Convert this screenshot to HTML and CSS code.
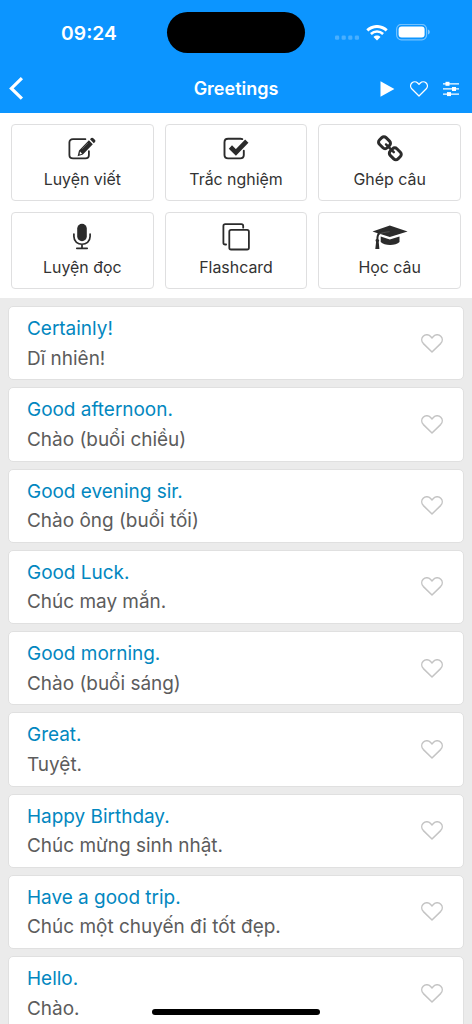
FILE: index.html
```html
<!DOCTYPE html>
<html lang="vi">
<head>
  <meta charset="utf-8">
  <title>Greetings</title>
  <link rel="stylesheet" href="styles.css">
</head>
<body>
  <svg class="defs" width="0" height="0">
    <symbol id="heart" viewBox="0 0 22 19">
      <path d="M11 18L2.4 9.6C.2 7.3.3 4.1 2.2 2.2 4.3.2 7.5.3 9.4 2.2L11 3.9l1.6-1.7c1.9-1.9 5.1-2 7.2 0 1.9 1.9 2 5.1-.2 7.4z" fill="none" stroke="currentColor" stroke-linejoin="round"/>
    </symbol>
  </svg>

  <header class="header">
    <div class="status-bar">
      <span class="time">09:24</span>
      <span class="island"></span>
      <div class="status-icons">
        <svg class="dots" width="24" height="5" viewBox="0 0 24 5">
          <rect x="0" y=".5" width="4.2" height="4.2" rx="1.3"/>
          <rect x="6.6" y=".5" width="4.2" height="4.2" rx="1.3"/>
          <rect x="13.2" y=".5" width="4.2" height="4.2" rx="1.3"/>
          <rect x="19.8" y=".5" width="4.2" height="4.2" rx="1.3"/>
        </svg>
        <svg class="wifi" width="22" height="16" viewBox="0 0 22 16">
          <path d="M1.3 5.4C6.8.1 15.2.1 20.7 5.4" fill="none" stroke="#fff" stroke-width="2.9"/>
          <path d="M4.9 9c3.5-3.3 8.7-3.3 12.2 0" fill="none" stroke="#fff" stroke-width="2.6"/>
          <path d="M7.5 11.9c2-1.9 5-1.9 7 0L11 15.4z" fill="#fff"/>
        </svg>
        <svg class="battery" width="35" height="17" viewBox="0 0 35 17">
          <rect x=".6" y=".4" width="30" height="15.4" rx="4.8" fill="none" stroke="#fff" stroke-opacity=".42" stroke-width="1.2"/>
          <rect x="2.6" y="2.6" width="26" height="11" rx="3" fill="#fff"/>
          <path d="M32 5.6c2.4.8 2.4 4.2 0 5z" fill="#fff" fill-opacity=".5"/>
        </svg>
      </div>
    </div>
    <nav class="nav-bar">
      <svg class="back" width="16" height="24" viewBox="0 0 16 24">
        <path d="M13.9 1.2L3.4 11.4l10.5 10.2" fill="none" stroke="#fff" stroke-width="3.2"/>
      </svg>
      <h1 class="title">Greetings</h1>
      <div class="nav-actions">
        <svg width="15" height="16" viewBox="0 0 15 16"><path d="M.5.3L14.4 8 .5 15.7z" fill="#fff"/></svg>
        <svg class="nav-heart" width="18" height="16"><use href="#heart"/></svg>
        <svg width="16" height="16" viewBox="0 0 16 16" fill="#fff">
          <path d="M0 2.2h16v1.2H0zM0 7.3h16v1.3H0zM0 12.5h16v1.2H0z"/>
          <rect x="2.5" y=".8" width="4" height="4"/>
          <rect x="9" y="6" width="4" height="4"/>
          <rect x="4" y="11.1" width="4" height="4"/>
        </svg>
      </div>
    </nav>
  </header>

  <section class="menu">
    <a class="menu-item">
      <svg width="30" height="30" viewBox="0 0 30 30">
        <path d="M18.4 6.2H6c-2.4 0-3.6 1.2-3.6 3.4v12.4c0 2.2 1.2 3.4 3.6 3.4h12.4c2.3 0 3.5-1.2 3.5-3.4v-3.8" fill="none" stroke="#2b2b2b" stroke-width="1.8" stroke-linecap="round"/>
        <path d="M23 6.2l1.2-1.1q1.1-.8 2.1.1l1.8 1.9q.8 1-.1 1.9l-1.2 1.2zM21.9 7.2l3.9 4L15.9 21.4l-5.3 1.8 1.4-5.7z" fill="#2b2b2b"/>
        <path d="M13 18.6l2.1 2.1-2.5.9z" fill="#fff"/>
        <path d="M15.2 15.8l5.6-5.7" stroke="#888" stroke-width=".6"/>
      </svg>
      <span>Luyện viết</span>
    </a>
    <a class="menu-item">
      <svg width="30" height="30" viewBox="0 0 30 30">
        <path d="M21.3 6.1q-.7-.3-1.7-.3H7.1C4.7 5.8 3.5 7 3.5 9.2v12.9c0 2.2 1.2 3.3 3.6 3.3h12.1c2.4 0 3.6-1.1 3.6-3.3v-4.4" fill="none" stroke="#2b2b2b" stroke-width="1.9" stroke-linecap="round"/>
        <path d="M9.4 14l5.5 5.4L25.8 8.2" fill="none" stroke="#2b2b2b" stroke-width="4.6"/>
      </svg>
      <span>Trắc nghiệm</span>
    </a>
    <a class="menu-item">
      <svg width="30" height="30" viewBox="0 0 30 30">
        <g fill="none" stroke="#2b2b2b" stroke-width="3">
          <rect x="4" y="5" width="11" height="9.4" rx="3" transform="rotate(45 9.5 9.7)"/>
          <rect x="14.8" y="16.1" width="11" height="9.4" rx="3" transform="rotate(45 20.3 20.8)"/>
          <path d="M11 11.4l7.8 7.8" stroke-width="2.4" stroke-linecap="round"/>
        </g>
      </svg>
      <span>Ghép câu</span>
    </a>
    <a class="menu-item">
      <svg width="30" height="30" viewBox="0 0 30 30">
        <rect x="10.2" y="2.8" width="9.6" height="17.4" rx="4.8" fill="#2b2b2b"/>
        <path d="M6.9 13V15.6c0 10.2 16.2 10.2 16.2 0V13M15 23.4v4M9.8 27.3h10.4" fill="none" stroke="#2b2b2b" stroke-width="1.7" stroke-linecap="round"/>
      </svg>
      <span>Luyện đọc</span>
    </a>
    <a class="menu-item">
      <svg width="30" height="30" viewBox="0 0 30 30">
        <path d="M5.1 23.5H4.2q-1.8 0-1.8-1.8V4.9q0-1.8 1.8-1.8h16.2q1.8 0 1.8 1.8v1.8" fill="none" stroke="#2b2b2b" stroke-width="1.8" stroke-linecap="round"/>
        <rect x="8.3" y="8.9" width="19.6" height="19.6" rx="1.8" fill="none" stroke="#2b2b2b" stroke-width="1.8"/>
      </svg>
      <span>Flashcard</span>
    </a>
    <a class="menu-item">
      <svg width="36" height="30" viewBox="0 0 36 30">
        <path d="M17.8 4.5l17.8 6-17.8 5.5-9.4-3-1.3 1.1c-.6 1.3-.7 2.7-.7 4.1 1 .7 1 1.9.3 2.5l.7 7.2H3.3l.8-7.2c-.8-.7-.7-2 .3-2.6.1-2 .3-4 1.3-5.8L.5 10.5z" fill="#2b2b2b"/>
        <path d="M8.7 15.6l9.1 2.9 9.7-2.9v5.5c-3.5 4-15.3 4-18.8 0z" fill="#2b2b2b"/>
        <path d="M7.2 13.2c2-1.3 5.5-2 10.4-2.5" fill="none" stroke="#666" stroke-width=".6"/>
      </svg>
      <span>Học câu</span>
    </a>
  </section>

  <main class="list">
    <div class="card">
      <div class="text"><p class="en">Certainly!</p><p class="vi">Dĩ nhiên!</p></div>
      <svg class="like"><use href="#heart"/></svg>
    </div>
    <div class="card">
      <div class="text"><p class="en">Good afternoon.</p><p class="vi">Chào (buổi chiều)</p></div>
      <svg class="like"><use href="#heart"/></svg>
    </div>
    <div class="card">
      <div class="text"><p class="en">Good evening sir.</p><p class="vi">Chào ông (buổi tối)</p></div>
      <svg class="like"><use href="#heart"/></svg>
    </div>
    <div class="card">
      <div class="text"><p class="en">Good Luck.</p><p class="vi">Chúc may mắn.</p></div>
      <svg class="like"><use href="#heart"/></svg>
    </div>
    <div class="card">
      <div class="text"><p class="en">Good morning.</p><p class="vi">Chào (buổi sáng)</p></div>
      <svg class="like"><use href="#heart"/></svg>
    </div>
    <div class="card">
      <div class="text"><p class="en">Great.</p><p class="vi">Tuyệt.</p></div>
      <svg class="like"><use href="#heart"/></svg>
    </div>
    <div class="card">
      <div class="text"><p class="en">Happy Birthday.</p><p class="vi">Chúc mừng sinh nhật.</p></div>
      <svg class="like"><use href="#heart"/></svg>
    </div>
    <div class="card">
      <div class="text"><p class="en">Have a good trip.</p><p class="vi">Chúc một chuyến đi tốt đẹp.</p></div>
      <svg class="like"><use href="#heart"/></svg>
    </div>
    <div class="card">
      <div class="text"><p class="en">Hello.</p><p class="vi">Chào.</p></div>
      <svg class="like"><use href="#heart"/></svg>
    </div>
  </main>

  <div class="home-indicator"></div>
</body>
</html>
```

FILE: styles.css
```css
* {
  box-sizing: border-box;
}

body {
  margin: 0;
  height: 1024px;
  overflow: hidden;
  position: relative;
  font-family: Inter, "Noto Sans", sans-serif;
  background-color: #ebebeb;
}

svg {
  display: block;
  flex: none;
}

.defs {
  position: absolute;
}

.header {
  height: 113px;
  background-color: #0c95ff;
  color: #fff;
}

.status-bar {
  height: 65px;
  display: grid;
  grid-template-columns: 167px 138px 1fr;
  align-items: center;
}

.time {
  padding-left: 11px;
  text-align: center;
  font-size: 19.3px;
  font-weight: 600;
}

.island {
  height: 41px;
  border-radius: 21px;
  background-color: #000;
}

.status-icons {
  display: flex;
  align-items: center;
  padding-left: 30px;
}

.dots {
  margin-top: 9px;
  fill: #fff;
  fill-opacity: 0.25;
}

.wifi {
  margin-left: 7px;
}

.battery {
  margin-left: 8px;
}

.nav-bar {
  height: 48px;
  display: grid;
  grid-template-columns: 100px 1fr 100px;
  align-items: center;
}

.back {
  margin-left: 8px;
}

.title {
  margin: 0;
  padding-bottom: 1px;
  text-align: center;
  font-size: 18px;
  font-weight: 600;
}

.nav-actions {
  display: flex;
  align-items: center;
  justify-content: flex-end;
  gap: 15px;
  padding-right: 13px;
}

.nav-heart {
  stroke-width: 1.6;
}

.menu {
  height: 185px;
  padding: 11px;
  display: grid;
  grid-template-columns: repeat(3, 1fr);
  grid-auto-rows: 77px;
  gap: 11px;
  background-color: #fff;
}

.menu-item {
  display: flex;
  flex-direction: column;
  align-items: center;
  padding-top: 8px;
  border: 1px solid #dfdfe0;
  border-radius: 4px;
  color: #333;
  font-size: 15.9px;
  line-height: 20px;
}

.menu-item span {
  margin-top: 7px;
}

.list {
  padding: 8px;
  display: flex;
  flex-direction: column;
  gap: 7px;
}

.card {
  flex: none;
  height: 74.25px;
  display: flex;
  align-items: center;
  justify-content: space-between;
  padding: 0 20px 0 18px;
  border: 1px solid #e0e0e0;
  border-radius: 5px;
  background-color: #fff;
}

.text {
  padding-top: 1px;
}

.card p {
  margin: 0;
  font-size: 18.97px;
  line-height: 29.5px;
}

.card .en {
  color: #0287c0;
}

.card .vi {
  color: #5c5c5c;
}

.like {
  width: 22px;
  height: 19px;
  color: #c4c4c4;
  stroke-width: 1.5;
}

.home-indicator {
  position: absolute;
  left: 152px;
  bottom: 9px;
  width: 168px;
  height: 6px;
  border-radius: 3px;
  background-color: #000;
}
```
